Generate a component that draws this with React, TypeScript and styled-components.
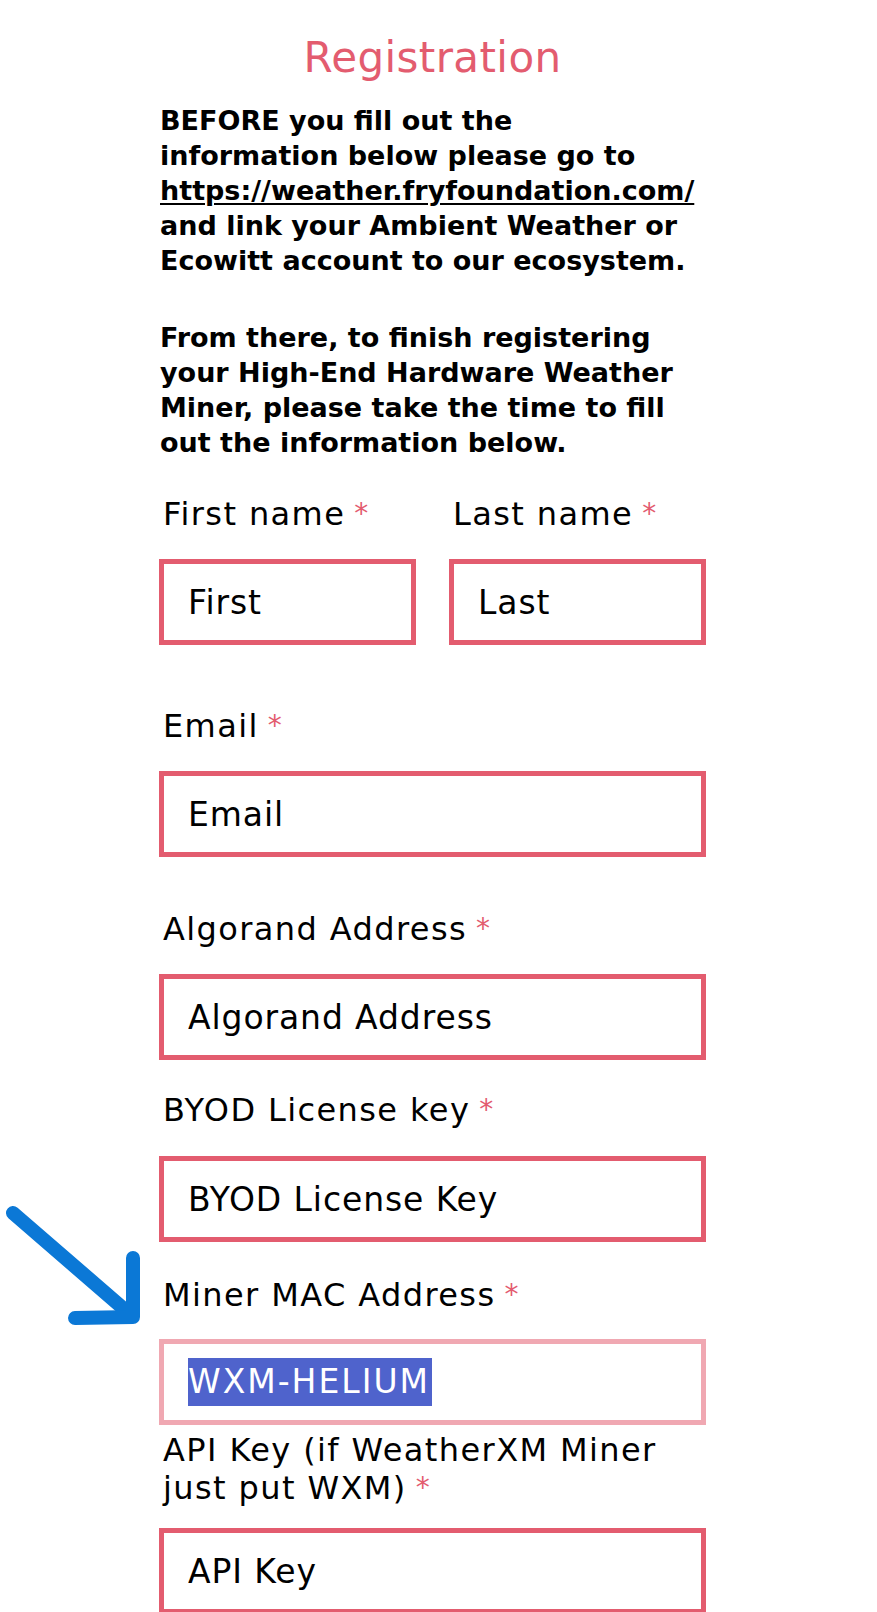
import * as React from 'react';
import styled, { createGlobalStyle } from 'styled-components';

const GlobalStyle = createGlobalStyle`
    html, body {
        margin: 0;
        padding: 0;
        background: #ffffff;
    }
    body {
        font-family: 'DejaVu Sans', 'Liberation Sans', sans-serif;
        color: #000000;
    }
`;

const PINK = '#e35c6f';

const Page = styled.div`
    position: relative;
    min-height: 1612px;
    overflow: hidden;
`;

// 폼 컬럼
const Column = styled.div`
    width: 547px;
    margin-left: 159px;
    padding-top: 33px;
`;

const Title = styled.h1`
    margin: 0;
    font-size: 42px;
    line-height: 50px;
    font-weight: 400;
    letter-spacing: 0.4px;
    color: ${PINK};
    text-align: center;
`;

const Intro = styled.p<{ $gap: number }>`
    margin: ${p => p.$gap}px 0 0 1px;
    font-size: 27px;
    line-height: 35px;
    font-weight: 700;
`;

const SiteLink = styled.a`
    color: inherit;
    text-decoration: underline;
    text-underline-offset: 3px;
    text-decoration-thickness: 2px;
`;

const Row = styled.div`
    display: flex;
    gap: 33px;
    margin-top: 35px;
`;

const Field = styled.div<{ $gap?: number }>`
    display: flex;
    flex-direction: column;
    flex: 1;
    margin-top: ${p => p.$gap ?? 0}px;
`;

const Label = styled.label<{ $space?: number }>`
    display: block;
    padding-left: 4px;
    margin-bottom: ${p => p.$space ?? 26}px;
    font-size: 32px;
    line-height: 38px;
    font-weight: 400;
    letter-spacing: 1.4px;
`;

const Required = styled.span`
    color: ${PINK};
    font-size: 28px;
    vertical-align: 2px;
    margin-left: 9px;
`;

const Input = styled.input`
    box-sizing: border-box;
    width: 100%;
    height: 86px;
    margin: 0;
    padding: 0 0 0 24px;
    border: 5px solid ${PINK};
    border-radius: 0;
    outline: none;
    background: #ffffff;
    font-family: 'DejaVu Sans', 'Liberation Sans', sans-serif;
    font-size: 33px;
    letter-spacing: 0.9px;
    color: #000000;

    &::placeholder {
        color: #000000;
        opacity: 1;
    }
`;

// 선택된(포커스) 입력칸
const ActiveBox = styled.div`
    box-sizing: border-box;
    width: 100%;
    height: 86px;
    padding-left: 24px;
    border: 5px solid #f0a8b2;
    display: flex;
    align-items: center;
    font-size: 33px;
`;

const Selected = styled.span`
    background: #4f63cc;
    color: #ffffff;
    line-height: 48px;
    letter-spacing: 2px;
    padding-right: 2px;
`;

const Pointer = styled.svg`
    position: absolute;
    left: 0;
    top: 1190px;
`;

const Req = () => <Required>*</Required>;

const App: React.FC = () => (
	<Page>
		<GlobalStyle/>
		<Column>
			<Title>Registration</Title>
			<Intro $gap={20}>
				BEFORE you fill out the<br/>
				information below please go to<br/>
				<SiteLink href='#'>https://weather.fryfoundation.com/</SiteLink><br/>
				and link your Ambient Weather or<br/>
				Ecowitt account to our ecosystem.
			</Intro>
			<Intro $gap={42}>
				From there, to finish registering<br/>
				your High-End Hardware Weather<br/>
				Miner, please take the time to fill<br/>
				out the information below.
			</Intro>
			<Row>
				<Field>
					<Label>First name<Req/></Label>
					<Input placeholder='First'/>
				</Field>
				<Field>
					<Label>Last name<Req/></Label>
					<Input placeholder='Last'/>
				</Field>
			</Row>
			<Field $gap={62}>
				<Label>Email<Req/></Label>
				<Input placeholder='Email'/>
			</Field>
			<Field $gap={53}>
				<Label>Algorand Address<Req/></Label>
				<Input placeholder='Algorand Address'/>
			</Field>
			<Field $gap={31}>
				<Label $space={27}>BYOD License key<Req/></Label>
				<Input placeholder='BYOD License Key'/>
			</Field>
			<Field $gap={34}>
				<Label $space={25}>Miner MAC Address<Req/></Label>
				<ActiveBox>
					<Selected>WXM-HELIUM</Selected>
				</ActiveBox>
			</Field>
			<Field $gap={6}>
				<Label $space={21}>API Key (if WeatherXM Miner<br/>just put WXM)<Req/></Label>
				<Input placeholder='API Key'/>
			</Field>
		</Column>
		<Pointer width='150' height='150' viewBox='0 0 150 150'>
			<g fill='none' stroke='#0b78d6' strokeWidth='14' strokeLinecap='round' strokeLinejoin='round'>
				<line x1='13' y1='23' x2='132' y2='126'/>
				<polyline points='133,68 133,127 75,128'/>
			</g>
		</Pointer>
	</Page>
);

export default App;
